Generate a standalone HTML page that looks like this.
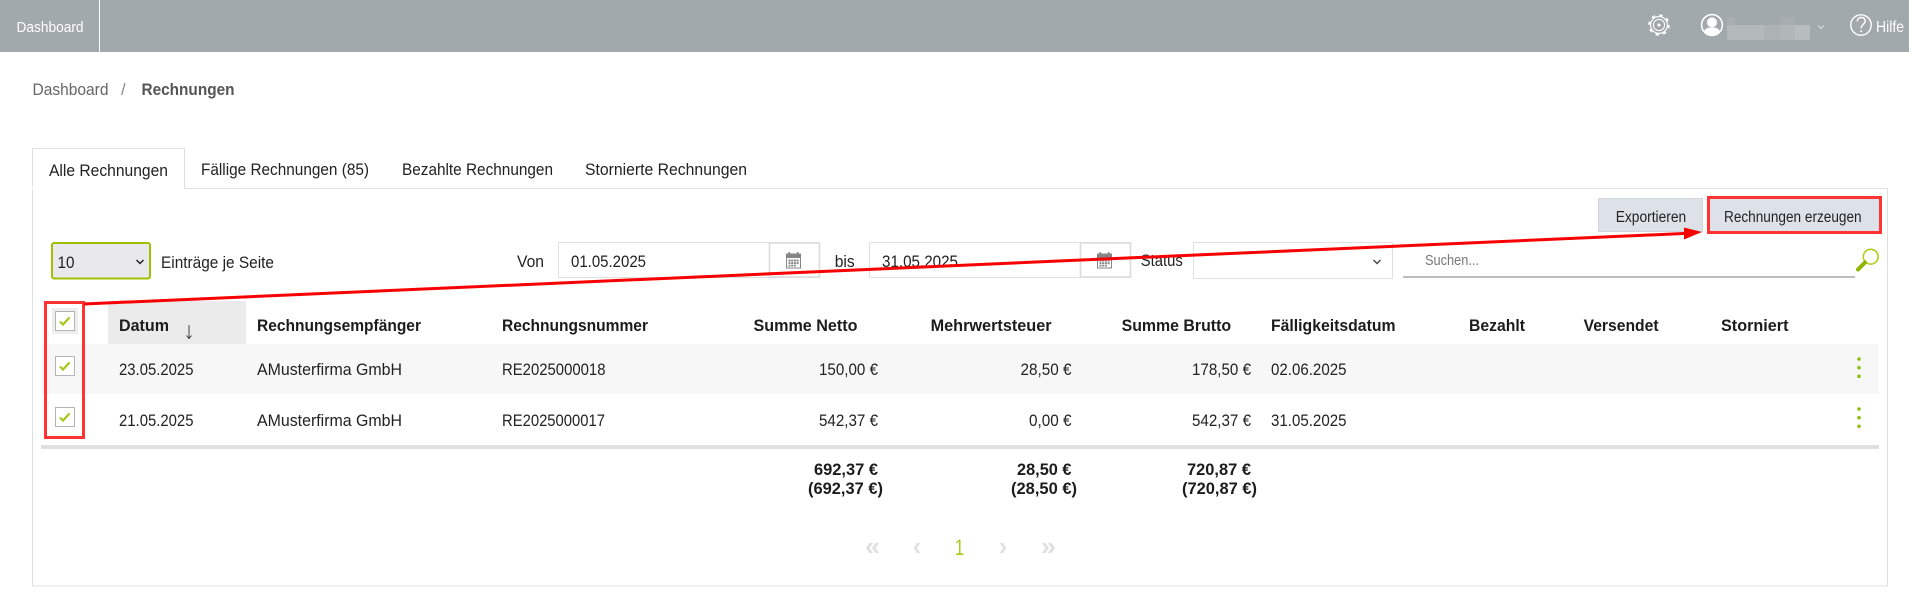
<!DOCTYPE html>
<html lang="de">
<head>
<meta charset="utf-8">
<title>Rechnungen</title>
<style>
html,body{margin:0;padding:0;background:#fff;width:1909px;height:589px;overflow:hidden}
svg{display:block}
text{font-family:"Liberation Sans",sans-serif;font-size:16.5px;fill:#222;white-space:pre}
.b{font-weight:bold;fill:#1c1c1c;font-size:16.5px}
.w{fill:#fff}
.pg{fill:#e0e0e0;font-size:26px;font-weight:bold}
</style>
</head>
<body>
<svg xmlns="http://www.w3.org/2000/svg" width="1909" height="589" viewBox="0 0 1909 589">
<rect width="1909" height="589" fill="#fff"/>

<!-- top bar -->
<rect width="1909" height="52" fill="#a2a9ac"/>
<rect x="99" y="0" width="1" height="52" fill="#fff"/>
<text class="w" x="16.5" y="32" style="font-size:15px" textLength="67" lengthAdjust="spacingAndGlyphs">Dashboard</text>

<!-- gear -->
<g fill="none" stroke="#fff" transform="translate(1659 25)">
  <circle r="9.6" stroke-width="2.4" stroke-dasharray="3.2 4.34"/>
  <circle r="8.4" stroke-width="1.1"/>
  <circle r="5.6" stroke-width="1"/>
  <circle r="1.5" fill="#fff" stroke="none"/>
</g>
<!-- user -->
<g transform="translate(1712 25)">
  <circle r="10.4" fill="none" stroke="#fff" stroke-width="1.6"/>
  <circle cx="0" cy="-2.6" r="5" fill="#fff"/>
  <path d="M-8 7.2C-7.2 3-3.4 2.4 0 2.4S7.2 3 8 7.2C5.8 9.4 2.8 10.2 0 10.2S-5.8 9.4-8 7.2Z" fill="#fff"/>
</g>
<!-- blurred name -->
<rect x="1727" y="17" width="8" height="8" fill="#a9afb1"/>
<rect x="1780" y="17" width="15" height="8" fill="#a8aeb0"/>
<rect x="1727" y="25" width="37" height="15" fill="#b3b8ba"/>
<rect x="1764" y="25" width="16" height="15" fill="#adb2b4"/>
<rect x="1780" y="25" width="15" height="15" fill="#b1b6b8"/>
<rect x="1795" y="25" width="15" height="15" fill="#b7bcbe"/>
<polyline points="1818,25.5 1821,28.5 1824,25.5" fill="none" stroke="#d5d9da" stroke-width="1.2"/>
<!-- help -->
<circle cx="1861" cy="25" r="10.2" fill="none" stroke="#fff" stroke-width="1.4"/>
<path d="M1857.2 21.4C1857.4 18.6 1859.2 17.4 1861.2 17.4C1863.6 17.4 1865.2 19 1865.2 21C1865.2 24 1861.2 24.6 1861.2 28.4" fill="none" stroke="#fff" stroke-width="1.4"/>
<circle cx="1861.2" cy="31.2" r="1" fill="#fff"/>
<text class="w" x="1876" y="32" style="font-size:16px" textLength="28" lengthAdjust="spacingAndGlyphs">Hilfe</text>

<!-- breadcrumb -->
<text x="32.5" y="95" style="fill:#666" textLength="76" lengthAdjust="spacingAndGlyphs">Dashboard</text>
<text x="121" y="95" style="fill:#888">/</text>
<text class="b" x="141.5" y="95" style="fill:#555" textLength="93" lengthAdjust="spacingAndGlyphs">Rechnungen</text>

<!-- panel + tabs -->
<path d="M184.5 188.5H1887.5V586H32.5V190" fill="none" stroke="#e0e0e0" stroke-width="1"/>
<path d="M32.5 189V148.5H184.5V188.5" fill="none" stroke="#e0e0e0" stroke-width="1"/>
<rect x="32" y="186" width="1" height="4" fill="#eee"/>
<text x="49" y="176" textLength="119" lengthAdjust="spacingAndGlyphs">Alle Rechnungen</text>
<text x="201" y="175" textLength="168" lengthAdjust="spacingAndGlyphs">Fällige Rechnungen (85)</text>
<text x="402" y="175" textLength="151" lengthAdjust="spacingAndGlyphs">Bezahlte Rechnungen</text>
<text x="585" y="175" textLength="162" lengthAdjust="spacingAndGlyphs">Stornierte Rechnungen</text>

<!-- buttons -->
<rect x="1598.5" y="198.5" width="104" height="33" fill="#dde2e9" stroke="#d2d6db"/>
<text x="1615.7" y="222" style="font-size:15.5px" textLength="70.5" lengthAdjust="spacingAndGlyphs">Exportieren</text>
<rect x="1708" y="198" width="172" height="34" fill="#dde2e9"/>
<rect x="1708.5" y="197.5" width="172" height="35" fill="none" stroke="#ff3333" stroke-width="3"/>
<text x="1724" y="222" style="font-size:15.5px" textLength="137.6" lengthAdjust="spacingAndGlyphs">Rechnungen erzeugen</text>

<!-- page size select -->
<rect x="52" y="243" width="98" height="35.5" rx="2" fill="#e9e9ed" stroke="#a0bf00" stroke-width="2"/>
<text x="57.5" y="268" style="font-size:17px" textLength="17" lengthAdjust="spacingAndGlyphs">10</text>
<polyline points="136.5,260 140,263.5 143.5,260" fill="none" stroke="#222" stroke-width="1.5"/>
<text x="161" y="268" textLength="113" lengthAdjust="spacingAndGlyphs">Einträge je Seite</text>

<!-- date from -->
<text x="517" y="267" textLength="27" lengthAdjust="spacingAndGlyphs">Von</text>
<rect x="558.5" y="242.5" width="261" height="35" fill="#fff" stroke="#e0e0e0"/>
<path d="M769.5 243V277H819.5V243H769.5" fill="none" stroke="#dcdcdc" stroke-width="1.6"/>
<text x="571" y="267" textLength="75" lengthAdjust="spacingAndGlyphs">01.05.2025</text>
<text x="834.7" y="267" textLength="20" lengthAdjust="spacingAndGlyphs">bis</text>

<!-- date to -->
<rect x="869.5" y="242.5" width="261" height="35" fill="#fff" stroke="#e0e0e0"/>
<path d="M1080.5 243V277H1130.5V243H1080.5" fill="none" stroke="#dcdcdc" stroke-width="1.6"/>
<text x="882" y="267" textLength="76" lengthAdjust="spacingAndGlyphs">31.05.2025</text>

<!-- calendar icons -->
<g transform="translate(786 252)" fill="#858585">
  <rect x="0" y="1.5" width="15" height="4"/>
  <rect x="2.5" y="0" width="1.6" height="3"/><rect x="10.9" y="0" width="1.6" height="3"/>
  <rect x=".5" y="5.5" width="14" height="10.5" fill="none" stroke="#858585"/>
  <rect x="2.5" y="7.5" width="2" height="2"/><rect x="5.2" y="7.5" width="2" height="2"/><rect x="7.9" y="7.5" width="2" height="2"/><rect x="10.6" y="7.5" width="2" height="2"/>
  <rect x="2.5" y="10.2" width="2" height="2"/><rect x="5.2" y="10.2" width="2" height="2"/><rect x="7.9" y="10.2" width="2" height="2"/><rect x="10.6" y="10.2" width="2" height="2"/>
  <rect x="2.5" y="12.9" width="2" height="1.6"/><rect x="5.2" y="12.9" width="2" height="1.6"/><rect x="7.9" y="12.9" width="2" height="1.6"/>
</g>
<g transform="translate(1097 252)" fill="#858585">
  <rect x="0" y="1.5" width="15" height="4"/>
  <rect x="2.5" y="0" width="1.6" height="3"/><rect x="10.9" y="0" width="1.6" height="3"/>
  <rect x=".5" y="5.5" width="14" height="10.5" fill="none" stroke="#858585"/>
  <rect x="2.5" y="7.5" width="2" height="2"/><rect x="5.2" y="7.5" width="2" height="2"/><rect x="7.9" y="7.5" width="2" height="2"/><rect x="10.6" y="7.5" width="2" height="2"/>
  <rect x="2.5" y="10.2" width="2" height="2"/><rect x="5.2" y="10.2" width="2" height="2"/><rect x="7.9" y="10.2" width="2" height="2"/><rect x="10.6" y="10.2" width="2" height="2"/>
  <rect x="2.5" y="12.9" width="2" height="1.6"/><rect x="5.2" y="12.9" width="2" height="1.6"/><rect x="7.9" y="12.9" width="2" height="1.6"/>
</g>

<!-- status -->
<text x="1140.8" y="266" textLength="42" lengthAdjust="spacingAndGlyphs">Status</text>
<rect x="1193.5" y="242.5" width="199" height="36" fill="#fff" stroke="#e0e0e0"/>
<polyline points="1373.5,260 1377,263.5 1380.5,260" fill="none" stroke="#444" stroke-width="1.4"/>

<!-- search -->
<text x="1425" y="265" style="font-size:15px;fill:#777" textLength="54" lengthAdjust="spacingAndGlyphs">Suchen...</text>
<rect x="1403" y="276" width="452" height="2" fill="#bdbdbd"/>
<circle cx="1870.7" cy="256.7" r="7.4" fill="#fff" stroke="#b3cc1e" stroke-width="1.6"/>
<line x1="1865" y1="262.5" x2="1858" y2="269.5" stroke="#8fb400" stroke-width="4" stroke-linecap="round"/>

<!-- table -->
<rect x="108" y="301" width="138" height="43" fill="#ebebeb"/>
<rect x="41" y="344" width="1838" height="50" fill="#f7f7f7"/>
<rect x="41" y="445" width="1838" height="4" fill="#e0e0e0"/>

<text class="b" x="119" y="331" textLength="50" lengthAdjust="spacingAndGlyphs">Datum</text>
<path d="M189 325V338M186.5 335.5L189 338.5L191.5 335.5" fill="none" stroke="#333" stroke-width=".9"/>
<text class="b" x="257" y="331" textLength="164" lengthAdjust="spacingAndGlyphs">Rechnungsempfänger</text>
<text class="b" x="502" y="331" textLength="146" lengthAdjust="spacingAndGlyphs">Rechnungsnummer</text>
<text class="b" x="753.5" y="331" textLength="104" lengthAdjust="spacingAndGlyphs">Summe Netto</text>
<text class="b" x="930.6" y="331" textLength="121" lengthAdjust="spacingAndGlyphs">Mehrwertsteuer</text>
<text class="b" x="1121.6" y="331" textLength="109.5" lengthAdjust="spacingAndGlyphs">Summe Brutto</text>
<text class="b" x="1271" y="331" textLength="124.5" lengthAdjust="spacingAndGlyphs">Fälligkeitsdatum</text>
<text class="b" x="1469" y="331" textLength="56" lengthAdjust="spacingAndGlyphs">Bezahlt</text>
<text class="b" x="1583.6" y="331" textLength="75" lengthAdjust="spacingAndGlyphs">Versendet</text>
<text class="b" x="1721" y="331" textLength="67.5" lengthAdjust="spacingAndGlyphs">Storniert</text>

<!-- row 1 -->
<text x="119" y="375" textLength="74.5" lengthAdjust="spacingAndGlyphs">23.05.2025</text>
<text x="257" y="375" textLength="145" lengthAdjust="spacingAndGlyphs">AMusterfirma GmbH</text>
<text x="502" y="375" textLength="103.5" lengthAdjust="spacingAndGlyphs">RE2025000018</text>
<text x="819" y="375" textLength="59" lengthAdjust="spacingAndGlyphs">150,00 €</text>
<text x="1020.5" y="375" textLength="51" lengthAdjust="spacingAndGlyphs">28,50 €</text>
<text x="1192" y="375" textLength="59" lengthAdjust="spacingAndGlyphs">178,50 €</text>
<text x="1271" y="375" textLength="75.5" lengthAdjust="spacingAndGlyphs">02.06.2025</text>

<!-- row 2 -->
<text x="119" y="426" textLength="74.5" lengthAdjust="spacingAndGlyphs">21.05.2025</text>
<text x="257" y="426" textLength="145" lengthAdjust="spacingAndGlyphs">AMusterfirma GmbH</text>
<text x="502" y="426" textLength="103" lengthAdjust="spacingAndGlyphs">RE2025000017</text>
<text x="819" y="426" textLength="59" lengthAdjust="spacingAndGlyphs">542,37 €</text>
<text x="1029" y="426" textLength="42.5" lengthAdjust="spacingAndGlyphs">0,00 €</text>
<text x="1192" y="426" textLength="59" lengthAdjust="spacingAndGlyphs">542,37 €</text>
<text x="1271" y="426" textLength="75.5" lengthAdjust="spacingAndGlyphs">31.05.2025</text>

<!-- row dots -->
<g fill="#8fbf14">
  <circle cx="1859" cy="359" r="1.8"/><circle cx="1859" cy="367.7" r="1.8"/><circle cx="1859" cy="376.3" r="1.8"/>
  <circle cx="1859" cy="409" r="1.8"/><circle cx="1859" cy="417.7" r="1.8"/><circle cx="1859" cy="426.3" r="1.8"/>
</g>

<!-- totals -->
<text class="b" x="814" y="475" textLength="64" lengthAdjust="spacingAndGlyphs">692,37 €</text>
<text class="b" x="808" y="494" textLength="75" lengthAdjust="spacingAndGlyphs">(692,37 €)</text>
<text class="b" x="1017" y="475" textLength="54.5" lengthAdjust="spacingAndGlyphs">28,50 €</text>
<text class="b" x="1011" y="494" textLength="66" lengthAdjust="spacingAndGlyphs">(28,50 €)</text>
<text class="b" x="1187" y="475" textLength="64" lengthAdjust="spacingAndGlyphs">720,87 €</text>
<text class="b" x="1182" y="494" textLength="75" lengthAdjust="spacingAndGlyphs">(720,87 €)</text>

<!-- pagination -->
<text class="pg" x="865" y="555" textLength="15" lengthAdjust="spacingAndGlyphs">«</text>
<text class="pg" x="913" y="555" textLength="8" lengthAdjust="spacingAndGlyphs">‹</text>
<text x="955" y="555" style="font-size:22px;fill:#a4c814" textLength="9" lengthAdjust="spacingAndGlyphs">1</text>
<text class="pg" x="999" y="555" textLength="8" lengthAdjust="spacingAndGlyphs">›</text>
<text class="pg" x="1041" y="555" textLength="15" lengthAdjust="spacingAndGlyphs">»</text>

<!-- checkboxes -->
<rect x="52" y="308" width="26" height="26" fill="#eeeeee"/>
<rect x="55.5" y="311.5" width="19" height="19" fill="#fff" stroke="#b4b4b4"/>
<polyline points="60,321.5 63,324.5 69.5,317.5" fill="none" stroke="#a3c81c" stroke-width="2.2"/>
<rect x="55.5" y="356.5" width="19" height="19" fill="#fff" stroke="#b4b4b4"/>
<polyline points="60,366.5 63,369.5 69.5,362.5" fill="none" stroke="#a3c81c" stroke-width="2.2"/>
<rect x="55.5" y="407.5" width="19" height="19" fill="#fff" stroke="#b4b4b4"/>
<polyline points="60,417.5 63,420.5 69.5,413.5" fill="none" stroke="#a3c81c" stroke-width="2.2"/>

<!-- red annotations -->
<rect x="45.5" y="302.5" width="38" height="135" fill="none" stroke="#ff3333" stroke-width="3"/>
<line x1="84" y1="304" x2="1686" y2="233.4" stroke="#f60000" stroke-width="3"/>
<polygon points="1684,227.5 1702,232 1684,239.5" fill="#f60000"/>
</svg>
</body>
</html>
